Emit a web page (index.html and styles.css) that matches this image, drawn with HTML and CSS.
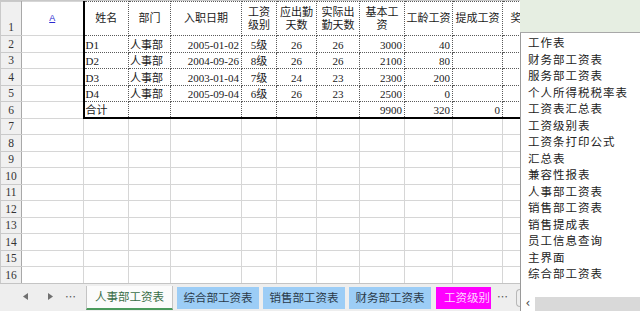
FILE: index.html
```html
<!DOCTYPE HTML>
<html lang="zh-CN">
  <head>
    <meta charset="utf-8" />
    <link rel="stylesheet" href="styles.css">
  </head>
  <body>
    <div class="sheet">
      <div class="grid-wrap">
        <table class="grid">
          <colgroup>
            <col class="w-hdr"><col class="w-a"><col class="w-name"><col class="w-dept">
            <col class="w-date"><col class="w-lvl"><col class="w-due"><col class="w-real">
            <col class="w-base"><col class="w-age"><col class="w-bonus"><col class="w-more">
          </colgroup>
          <tr class="row-head">
            <th class="rownum">1</th>
            <td class="cell-a link-cell"><span class="link">A</span></td>
            <td class="t first c">姓名</td>
            <td class="t c">部门</td>
            <td class="t c">入职日期</td>
            <td class="t c">工资<br>级别</td>
            <td class="t c">应出勤<br>天数</td>
            <td class="t c">实际出<br>勤天数</td>
            <td class="t c">基本工<br>资</td>
            <td class="t c">工龄工资</td>
            <td class="t c">提成工资</td>
            <td class="t c">奖金补贴</td>
          </tr>
          <tr>
            <th class="rownum">2</th><td class="cell-a"></td>
            <td class="t first">D1</td><td class="t">人事部</td><td class="t r">2005-01-02</td>
            <td class="t c">5级</td><td class="t c">26</td><td class="t c">26</td>
            <td class="t r">3000</td><td class="t r">40</td><td class="t"></td><td class="t"></td>
          </tr>
          <tr>
            <th class="rownum">3</th><td class="cell-a"></td>
            <td class="t first">D2</td><td class="t">人事部</td><td class="t r">2004-09-26</td>
            <td class="t c">8级</td><td class="t c">26</td><td class="t c">26</td>
            <td class="t r">2100</td><td class="t r">80</td><td class="t"></td><td class="t"></td>
          </tr>
          <tr>
            <th class="rownum">4</th><td class="cell-a"></td>
            <td class="t first">D3</td><td class="t">人事部</td><td class="t r">2003-01-04</td>
            <td class="t c">7级</td><td class="t c">24</td><td class="t c">23</td>
            <td class="t r">2300</td><td class="t r">200</td><td class="t"></td><td class="t"></td>
          </tr>
          <tr>
            <th class="rownum">5</th><td class="cell-a"></td>
            <td class="t first">D4</td><td class="t">人事部</td><td class="t r">2005-09-04</td>
            <td class="t c">6级</td><td class="t c">26</td><td class="t c">23</td>
            <td class="t r">2500</td><td class="t r">0</td><td class="t"></td><td class="t"></td>
          </tr>
          <tr class="row-total">
            <th class="rownum">6</th><td class="cell-a"></td>
            <td class="t first">合计</td><td class="t"></td><td class="t"></td>
            <td class="t"></td><td class="t"></td><td class="t"></td>
            <td class="t r">9900</td><td class="t r">320</td><td class="t r">0</td><td class="t"></td>
          </tr>
          <tr><th class="rownum">7</th><td></td><td></td><td></td><td></td><td></td><td></td><td></td><td></td><td></td><td></td><td></td></tr>
          <tr><th class="rownum">8</th><td></td><td></td><td></td><td></td><td></td><td></td><td></td><td></td><td></td><td></td><td></td></tr>
          <tr><th class="rownum">9</th><td></td><td></td><td></td><td></td><td></td><td></td><td></td><td></td><td></td><td></td><td></td></tr>
          <tr><th class="rownum">10</th><td></td><td></td><td></td><td></td><td></td><td></td><td></td><td></td><td></td><td></td><td></td></tr>
          <tr><th class="rownum">11</th><td></td><td></td><td></td><td></td><td></td><td></td><td></td><td></td><td></td><td></td><td></td></tr>
          <tr><th class="rownum">12</th><td></td><td></td><td></td><td></td><td></td><td></td><td></td><td></td><td></td><td></td><td></td></tr>
          <tr><th class="rownum">13</th><td></td><td></td><td></td><td></td><td></td><td></td><td></td><td></td><td></td><td></td><td></td></tr>
          <tr><th class="rownum">14</th><td></td><td></td><td></td><td></td><td></td><td></td><td></td><td></td><td></td><td></td><td></td></tr>
          <tr><th class="rownum">15</th><td></td><td></td><td></td><td></td><td></td><td></td><td></td><td></td><td></td><td></td><td></td></tr>
          <tr><th class="rownum">16</th><td></td><td></td><td></td><td></td><td></td><td></td><td></td><td></td><td></td><td></td><td></td></tr>
        </table>
      </div>

      <div class="tabs">
        <div class="tab-nav">
          <svg class="arrow" width="5" height="7" viewBox="0 0 5 7"><polygon points="5,0 5,7 0,3.5" fill="#707070"/></svg>
          <svg class="arrow" width="5" height="7" viewBox="0 0 5 7"><polygon points="0,0 0,7 5,3.5" fill="#707070"/></svg>
          <span class="dots">…</span>
        </div>
        <div class="tab active">人事部工资表</div>
        <div class="tab blue">综合部工资表</div>
        <div class="tab blue">销售部工资表</div>
        <div class="tab blue">财务部工资表</div>
        <div class="tab pink">工资级别</div>
        <span class="dots more">…</span>
        <span class="splitter"></span>
      </div>
    </div>

    <!-- 工作表列表弹出菜单 -->
    <div class="sheet-list">
      <div class="list-top"></div>
      <ul class="list-items">
        <li>工作表</li>
        <li>财务部工资表</li>
        <li>服务部工资表</li>
        <li>个人所得税税率表</li>
        <li>工资表汇总表</li>
        <li>工资级别表</li>
        <li>工资条打印公式</li>
        <li>汇总表</li>
        <li>兼容性报表</li>
        <li>人事部工资表</li>
        <li>销售部工资表</li>
        <li>销售提成表</li>
        <li>员工信息查询</li>
        <li>主界面</li>
        <li>综合部工资表</li>
      </ul>
      <div class="list-scroll">
        <span class="scroll-left">&lsaquo;</span>
        <span class="scroll-track"></span>
      </div>
    </div>
  </body>
</html>
```

FILE: styles.css
```css
body {
  margin: 0;
  width: 640px;
  height: 311px;
  overflow: hidden;
  position: relative;
  background-color: #ffffff;
  font-family: "Liberation Serif", "Noto Sans CJK SC", serif;
}

.sheet {
  display: flex;
  flex-direction: column;
  height: 311px;
}
.grid-wrap {
  height: 283px;
  overflow: hidden;
  border-top: 1px solid #c8c8c8;
  box-sizing: border-box;
}

table.grid {
  border-collapse: collapse;
  table-layout: fixed;
  width: 562px;
  font-size: 11px;
  color: #1a1a1a;
}
col.w-hdr { width: 21px; }
col.w-a { width: 62px; }
col.w-name { width: 45px; }
col.w-dept { width: 42px; }
col.w-date { width: 71px; }
col.w-lvl { width: 35px; }
col.w-due { width: 40px; }
col.w-real { width: 43px; }
col.w-base { width: 45px; }
col.w-age { width: 48px; }
col.w-bonus { width: 50px; }
col.w-more { width: 60px; }

table.grid tr {
  height: 16.5px;
}
table.grid tr.row-head {
  height: 34px;
}
table.grid td {
  border: 1px solid #d6d6d6;
  padding: 0 1px;
  white-space: nowrap;
  overflow: hidden;
  line-height: 13px;
  vertical-align: bottom;
}
table.grid th.rownum {
  border: 1px solid #cacaca;
  border-right: 1px solid #a8a8a8;
  background-color: #f0f0f0;
  font-weight: normal;
  font-size: 11.5px;
  color: #333333;
  text-align: center;
  vertical-align: bottom;
  padding: 0 0 1px 0;
  line-height: 13px;
}

table.grid td.t {
  border: 1px dotted #5a5a5a;
}
table.grid td.first {
  border-left: 2px solid #000000;
}
table.grid tr.row-total td.t {
  border-bottom: 2px solid #000000;
}
table.grid tr.row-head td {
  vertical-align: middle;
  line-height: 13px;
}
table.grid td.c { text-align: center; }
table.grid td.r { text-align: right; padding-right: 2px; }

td.link-cell {
  text-align: center;
}
span.link {
  font-family: "Liberation Sans", sans-serif;
  font-size: 9px;
  color: #2b2bd0;
  text-decoration: underline;
  position: relative;
  top: -1px;
}

.tabs {
  display: flex;
  align-items: flex-start;
  height: 28px;
  box-sizing: border-box;
  background-color: #eeeeee;
  border-top: 1px solid #c4c4c4;
  font-family: "Noto Sans CJK SC", sans-serif;
  font-size: 11.5px;
}
.tab-nav {
  width: 86px;
  height: 24px;
  display: flex;
  align-items: center;
  padding-left: 23px;
  box-sizing: border-box;
}
.tab-nav .arrow {
  margin-right: 20px;
}
.tab-nav .arrow + .arrow {
  margin-right: 12px;
}
.dots {
  color: #555555;
  font-size: 11px;
  line-height: 24px;
}
.tab {
  box-sizing: border-box;
  height: 22px;
  margin-top: 3px;
  line-height: 21px;
  text-align: center;
  white-space: nowrap;
  overflow: hidden;
}
.tab.active {
  width: 87px;
  background-color: #fbfbfb;
  border-left: 1px solid #c4c4c4;
  border-right: 1px solid #c4c4c4;
  border-bottom: 2px solid #4a9a5c;
  margin-top: 2px;
  height: 24px;
  color: #3a6e47;
}
.tab.blue {
  width: 82px;
  margin-left: 4px;
  background-color: #9ccdf6;
  color: #2a3a4a;
}
.tab.pink {
  width: 55px;
  margin-left: 5px;
  background-color: #ff00ff;
  color: #ffd6ff;
  text-align: left;
  padding-left: 8px;
}
.dots.more {
  margin-left: 6px;
}
.splitter {
  display: block;
  width: 4px;
  height: 16px;
  margin: 5px 0 0 8px;
  border: 1px solid #b8b8b8;
  border-right: none;
  border-radius: 4px 0 0 4px;
}

/* 弹出的工作表列表 */
.sheet-list {
  position: absolute;
  top: 0;
  left: 520px;
  width: 120px;
  height: 311px;
  display: flex;
  flex-direction: column;
  background-color: #ffffff;
  border-left: 1px solid #9a9a9a;
  box-sizing: border-box;
  font-family: "Noto Sans CJK SC", sans-serif;
}
.list-top {
  height: 32px;
  background-color: #e6eee2;
  border-bottom: 1px solid #a8a8a8;
  margin-left: -1px;
}
ul.list-items {
  flex: 1;
  list-style-type: none;
  margin: 0;
  padding: 1px 0 0 7px;
}
ul.list-items li {
  height: 16.5px;
  line-height: 16.5px;
  font-size: 11.5px;
  letter-spacing: 1px;
  color: #222222;
  white-space: nowrap;
}
.list-scroll {
  display: flex;
  height: 14px;
  align-items: stretch;
}
.scroll-left {
  width: 14px;
  font-family: "DejaVu Sans", sans-serif;
  font-size: 12px;
  line-height: 13px;
  text-align: center;
  color: #444444;
}
.scroll-track {
  flex: 1;
  background-color: #d9d9d9;
}
```
